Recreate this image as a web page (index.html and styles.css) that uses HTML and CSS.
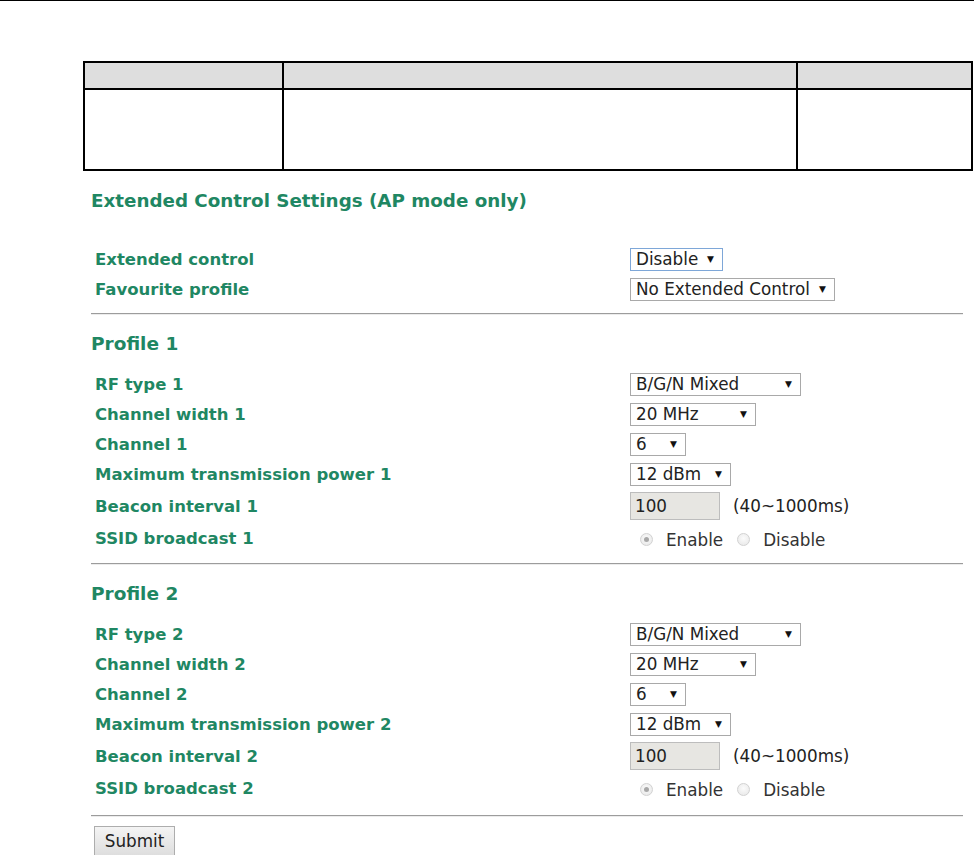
FILE: index.html
```html
<!DOCTYPE html>
<html lang="en">
<head>
<meta charset="utf-8">
<title>Extended Control Settings</title>
<link rel="stylesheet" href="styles.css">
</head>
<body>
<div class="page-rule"></div>

<table class="doc-table">
  <thead>
    <tr><th class="c1"></th><th class="c2"></th><th class="c3"></th></tr>
  </thead>
  <tbody>
    <tr><td></td><td></td><td></td></tr>
  </tbody>
</table>

<div class="form">
  <h2 class="title">Extended Control Settings (AP mode only)</h2>

  <div class="rows first">
    <div class="row">
      <span class="label">Extended control</span>
      <span class="select focused w-disable">Disable<i class="arr">▼</i></span>
    </div>
    <div class="row">
      <span class="label">Favourite profile</span>
      <span class="select w-noext">No Extended Control<i class="arr">▼</i></span>
    </div>
  </div>

  <div class="rule r1"></div>

  <h3 class="profile">Profile 1</h3>
  <div class="rows">
    <div class="row">
      <span class="label">RF type 1</span>
      <span class="select w-rf">B/G/N Mixed<i class="arr">▼</i></span>
    </div>
    <div class="row">
      <span class="label">Channel width 1</span>
      <span class="select w-cw">20 MHz<i class="arr">▼</i></span>
    </div>
    <div class="row">
      <span class="label">Channel 1</span>
      <span class="select w-ch">6<i class="arr">▼</i></span>
    </div>
    <div class="row">
      <span class="label">Maximum transmission power 1</span>
      <span class="select w-pw">12 dBm<i class="arr">▼</i></span>
    </div>
    <div class="row tall">
      <span class="label">Beacon interval 1</span>
      <span class="field"><span class="input">100</span><span class="hint">(40~1000ms)</span></span>
    </div>
    <div class="row">
      <span class="label">SSID broadcast 1</span>
      <span class="radios">
        <span class="radio checked"></span><span class="rtext">Enable</span>
        <span class="radio"></span><span class="rtext">Disable</span>
      </span>
    </div>
  </div>

  <div class="rule r2"></div>

  <h3 class="profile">Profile 2</h3>
  <div class="rows">
    <div class="row">
      <span class="label">RF type 2</span>
      <span class="select w-rf">B/G/N Mixed<i class="arr">▼</i></span>
    </div>
    <div class="row">
      <span class="label">Channel width 2</span>
      <span class="select w-cw">20 MHz<i class="arr">▼</i></span>
    </div>
    <div class="row">
      <span class="label">Channel 2</span>
      <span class="select w-ch">6<i class="arr">▼</i></span>
    </div>
    <div class="row">
      <span class="label">Maximum transmission power 2</span>
      <span class="select w-pw">12 dBm<i class="arr">▼</i></span>
    </div>
    <div class="row tall">
      <span class="label">Beacon interval 2</span>
      <span class="field"><span class="input">100</span><span class="hint">(40~1000ms)</span></span>
    </div>
    <div class="row">
      <span class="label">SSID broadcast 2</span>
      <span class="radios">
        <span class="radio checked"></span><span class="rtext">Enable</span>
        <span class="radio"></span><span class="rtext">Disable</span>
      </span>
    </div>
  </div>

  <div class="rule r3"></div>

  <button class="submit" type="button">Submit</button>
</div>
</body>
</html>
```

FILE: styles.css
```css
html, body {
  margin: 0;
  padding: 0;
  background: #ffffff;
}

body {
  font-family: "DejaVu Sans", Verdana, sans-serif;
  color: #222222;
  width: 974px;
  height: 855px;
  overflow: hidden;
}

.page-rule {
  height: 1px;
  background: #000000;
}

.doc-table {
  border-collapse: collapse;
  margin: 60px 0 0 83px;
  width: 890px;
}

.doc-table th,
.doc-table td {
  border: 2px solid #000000;
  padding: 0;
}

.doc-table th {
  background: #dedede;
  height: 25px;
}

.doc-table td {
  height: 79px;
}

.doc-table .c1 { width: 197px; }
.doc-table .c2 { width: 512px; }

.form {
  margin-left: 91px;
  width: 872px;
}

.title {
  margin: 19px 0 0 0;
  font-size: 18.3px;
  font-weight: bold;
  line-height: 22px;
  color: #1f8763;
}

.rows.first {
  margin-top: 32px;
}

.row {
  display: grid;
  grid-template-columns: 539px 1fr;
  align-items: center;
  height: 30px;
}

.row.tall {
  height: 34px;
}

.label {
  padding-left: 4px;
  font-size: 16.5px;
  font-weight: bold;
  color: #1f8763;
  white-space: nowrap;
}

.select {
  box-sizing: border-box;
  display: inline-flex;
  align-items: center;
  justify-content: space-between;
  height: 23px;
  padding: 0 8px 0 5px;
  border: 1px solid #a9a9a9;
  background: #ffffff;
  font-size: 16.8px;
  color: #222222;
  white-space: nowrap;
}

.select.focused {
  border-color: #7ea7d8;
}

.arr {
  font-style: normal;
  font-size: 9px;
  color: #111111;
}

.w-disable { width: 93px; }
.w-noext { width: 205px; }
.w-rf { width: 171px; }
.w-cw { width: 126px; }
.w-ch { width: 56px; }
.w-pw { width: 101px; }

.field {
  display: flex;
  align-items: center;
}

.input {
  box-sizing: border-box;
  width: 90px;
  height: 28px;
  line-height: 26px;
  padding-left: 4px;
  border: 1px solid #bdbdbd;
  background: #e7e6e2;
  font-size: 16.8px;
  color: #222222;
}

.hint {
  margin-left: 13px;
  font-size: 16.8px;
  color: #222222;
}

.radios {
  display: flex;
  align-items: center;
  padding-left: 10px;
  padding-top: 3px;
  font-size: 16.8px;
  color: #333333;
}

.radio {
  box-sizing: border-box;
  width: 13px;
  height: 13px;
  border-radius: 50%;
  border: 1px solid #d2d2d2;
  background: radial-gradient(circle at 50% 40%, #fbfbfb, #e6e6e6);
  display: flex;
  align-items: center;
  justify-content: center;
}

.radio.checked::after {
  content: "";
  width: 5px;
  height: 5px;
  border-radius: 50%;
  background: #a8a8a8;
}

.rtext {
  margin-left: 13px;
  margin-right: 14px;
}

.rule {
  height: 1px;
  background: #9c9c9c;
  border-bottom: 1px solid #ececec;
}

.rule.r1 { margin-top: 9px; }
.rule.r2 { margin-top: 10px; }
.rule.r3 { margin-top: 12px; }

.profile {
  margin: 18px 0 0 0;
  font-size: 18.5px;
  font-weight: bold;
  line-height: 22px;
  color: #1f8763;
}

.profile + .rows {
  margin-top: 14px;
}

.submit {
  margin: 9px 0 0 3px;
  width: 81px;
  height: 30px;
  border: 1px solid #adadad;
  border-radius: 0;
  background: linear-gradient(#f4f4f4, #dedede);
  font-family: "DejaVu Sans", Verdana, sans-serif;
  font-size: 16.8px;
  color: #222222;
  padding: 0;
}
```
